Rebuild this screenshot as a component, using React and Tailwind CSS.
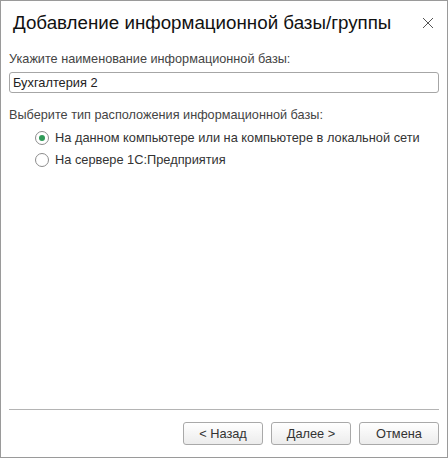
import React from 'react';

function Radio({ checked, label }) {
  return (
    <label className="flex items-center h-[22px]">
      <span className="w-[14px] h-[14px] rounded-full border border-[#8c8c8c] bg-white flex items-center justify-center mr-[6px]">
        {checked && <span className="w-[6px] h-[6px] rounded-full bg-[#2f9a57]" />}
      </span>
      <span className="text-[12.8px] text-[#333]">{label}</span>
    </label>
  );
}

function Button({ children }) {
  return (
    <button className="w-[80px] h-[23px] rounded-[3px] border border-[#a9a9a9] bg-gradient-to-b from-white to-[#ececec] text-[12.8px] text-[#333]">
      {children}
    </button>
  );
}

export default function App() {
  return (
    <div
      className="w-[448px] h-[458px] border border-[#9a9a9a] bg-white flex flex-col"
      style={{ fontFamily: '"Liberation Sans", Arial, sans-serif' }}
    >
      <div className="flex items-center h-[42px] pl-[12px] pr-[13px]">
        <div className="flex-1 text-[18.75px] text-[#111] leading-none pt-[2px]">Добавление информационной базы/группы</div>
        <svg width="12" height="12" viewBox="0 0 12 12" className="mt-[1px]">
          <path d="M1 1L11 11M11 1L1 11" stroke="#555" strokeWidth="1" />
        </svg>
      </div>

      <div className="flex-1 px-[8px] pt-[7px] flex flex-col">
        <div className="text-[12.7px] text-[#444] h-[18px] leading-[18px]">Укажите наименование информационной базы:</div>
        <div className="mt-[4px] h-[21px] border border-[#a6a6a6] rounded-[3px] flex items-center px-[3px] text-[12.8px] text-[#222]">
          Бухгалтерия 2
        </div>
        <div className="mt-[13px] text-[12.7px] text-[#444] h-[18px] leading-[18px]">Выберите тип расположения информационной базы:</div>
        <div className="pl-[26px] mt-[3px] flex flex-col">
          <Radio checked label="На данном компьютере или на компьютере в локальной сети" />
          <Radio label="На сервере 1С:Предприятия" />
        </div>
        <div className="flex-1" />
        <div className="border-t border-[#b4b4b4]" />
        <div className="flex justify-end gap-[8px] pt-[12px] pb-[12px]">
          <Button>&lt; Назад</Button>
          <Button>Далее &gt;</Button>
          <Button>Отмена</Button>
        </div>
      </div>
    </div>
  );
}
